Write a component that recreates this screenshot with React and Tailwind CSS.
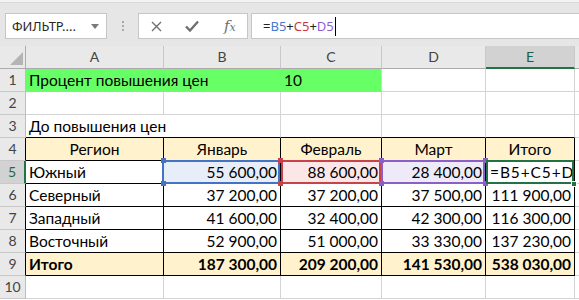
import React from "react";

function Corner({ pos, color }) {
  return <span className={`absolute w-[5px] h-[5px] ${pos} ${color}`} />;
}

export default function App() {
  const g = "h-[23px] border-r border-b border-[#d4d4d4] px-[3px] flex items-end pb-[2px] overflow-hidden whitespace-nowrap";
  const b = "h-[23px] border-r border-b border-black px-[3px] flex items-end pb-[2px] overflow-hidden whitespace-nowrap";
  const rh = "h-[23px] border-b border-[#c8c8c8] bg-[#e9e9e9] flex items-center justify-center text-[14px] text-[#444]";
  const rows = [
    [6, "Северный", "37 200,00", "37 200,00", "37 500,00", "111 900,00"],
    [7, "Западный", "41 600,00", "32 400,00", "42 300,00", "116 300,00"],
    [8, "Восточный", "52 900,00", "51 000,00", "33 330,00", "137 230,00"],
  ];
  return (
    <div className="w-[579px] h-[300px] overflow-hidden bg-white font-['Lato',_sans-serif] text-[15.5px] leading-[18px] text-black">
      {/* toolbar */}
      <div className="h-[46px] bg-[#e6e6e6] flex flex-col">
        <div className="h-[2px] bg-[#f3f3f3]" />
        <div className="h-[1px] bg-[#d9d9d9]" />
        <div className="flex items-start pt-[10px] pl-[5px] font-['Noto_Sans',_sans-serif]">
          <div className="w-[102px] h-[26px] bg-white border border-[#c6c6c6] flex items-center pl-[6px] pr-[7px] justify-between">
            <span className="text-[13px] text-[#262626]">ФИЛЬТР....</span>
            <svg width="8" height="5" viewBox="0 0 8 5"><path d="M0 0h8L4 5z" fill="#7a7a7a" /></svg>
          </div>
          <div className="w-[31px] h-[26px] flex flex-col items-center justify-center gap-[2px]">
            <span className="w-[2px] h-[2px] bg-[#a8a8a8]" />
            <span className="w-[2px] h-[2px] bg-[#a8a8a8]" />
            <span className="w-[2px] h-[2px] bg-[#a8a8a8]" />
          </div>
          <div className="w-[110px] h-[26px] bg-white border border-[#c6c6c6] flex items-center">
            <svg className="ml-[12px]" width="11" height="11" viewBox="0 0 11 11">
              <path d="M1 1L10 10M10 1L1 10" stroke="#6f6f6f" strokeWidth="1.4" fill="none" />
            </svg>
            <svg className="ml-[23px]" width="14" height="12" viewBox="0 0 14 12">
              <path d="M1 6.5L5 10.5L13 1.5" stroke="#6f6f6f" strokeWidth="2.4" fill="none" />
            </svg>
            <span className="ml-[25px] text-[15px] italic text-[#6f6f6f] font-['DejaVu_Serif',_serif] leading-none">
              f<span className="text-[11px]">x</span>
            </span>
          </div>
          <div className="ml-[3px] flex-1 h-[26px] bg-white border border-[#c6c6c6] border-r-0 flex items-center pl-[11px] text-[13px]">
            <span className="text-[#222]">=</span>
            <span className="text-[#4a78d0]">B5</span>
            <span className="text-[#222]">+</span>
            <span className="text-[#d0353f]">C5</span>
            <span className="text-[#222]">+</span>
            <span className="text-[#8f5fcf]">D5</span>
            <span className="w-[1px] h-[19px] bg-black ml-[1px]" />
          </div>
        </div>
      </div>

      {/* sheet */}
      <div className="grid grid-cols-[26px_138px_117px_101px_104px_89px_1fr]">
        {/* header */}
        <div className="h-[23px] bg-[#e9e9e9] border-r border-b border-[#ababab] relative">
          <svg className="absolute left-[10px] top-[6px]" width="13" height="13" viewBox="0 0 13 13"><path d="M13 0V13H0z" fill="#b4b4b4" /></svg>
        </div>
        <div className="h-[23px] bg-[#e9e9e9] border-r border-b border-r-[#c8c8c8] border-b-[#ababab] flex items-end justify-center pb-[2px] text-[14px] text-[#444]">A</div>
        <div className="h-[23px] bg-[#e9e9e9] border-r border-b border-r-[#c8c8c8] border-b-[#ababab] flex items-end justify-center pb-[2px] text-[14px] text-[#444]">B</div>
        <div className="h-[23px] bg-[#e9e9e9] border-r border-b border-r-[#c8c8c8] border-b-[#ababab] flex items-end justify-center pb-[2px] text-[14px] text-[#444]">C</div>
        <div className="h-[23px] bg-[#e9e9e9] border-r border-b border-r-[#c8c8c8] border-b-[#ababab] flex items-end justify-center pb-[2px] text-[14px] text-[#444]">D</div>
        <div className="h-[23px] bg-[#d2d2d2] border-r border-b-2 border-r-[#c8c8c8] border-b-[#217346] flex items-end justify-center pb-[1px] text-[14px] text-[#1e5e3a]">E</div>
        <div className="h-[23px] bg-[#e9e9e9] border-b border-[#ababab]" />

        {/* row 1 */}
        <div className={`${rh} border-r border-r-[#bdbdbd]`}>1</div>
        <div className="col-span-2 h-[23px] bg-[#66ff66] border-b border-[#66ff66] px-[3px] flex items-end pb-[2px] whitespace-nowrap">Процент повышения цен</div>
        <div className="h-[23px] bg-[#66ff66] border-r border-b border-r-[#d4d4d4] border-b-[#66ff66] px-[3px] flex items-end pb-[2px]">10</div>
        <div className={g} />
        <div className={g} />
        <div className={g} />

        {/* row 2 */}
        <div className={`${rh} border-r border-r-[#bdbdbd]`}>2</div>
        <div className={g} />
        <div className={g} />
        <div className={g} />
        <div className={g} />
        <div className={g} />
        <div className={g} />

        {/* row 3 */}
        <div className={`${rh} border-r border-r-[#bdbdbd]`}>3</div>
        <div className="col-span-2 h-[23px] border-r border-b border-r-[#d4d4d4] border-b-black px-[3px] flex items-end pb-[2px] whitespace-nowrap">До повышения цен</div>
        <div className="h-[23px] border-r border-b border-r-[#d4d4d4] border-b-black" />
        <div className="h-[23px] border-r border-b border-r-[#d4d4d4] border-b-black" />
        <div className="h-[23px] border-r border-b border-r-[#d4d4d4] border-b-black" />
        <div className={g} />

        {/* row 4 */}
        <div className={`${rh} border-r border-r-black`}>4</div>
        <div className={`${b} bg-[#fff2cc] justify-center`}>Регион</div>
        <div className={`${b} bg-[#fff2cc] justify-center`}>Январь</div>
        <div className={`${b} bg-[#fff2cc] justify-center`}>Февраль</div>
        <div className={`${b} bg-[#fff2cc] justify-center`}>Март</div>
        <div className={`${b} bg-[#fff2cc] justify-center`}>Итого</div>
        <div className={g} />

        {/* row 5 */}
        <div className="h-[23px] border-b border-[#c8c8c8] border-r-2 border-r-[#217346] bg-[#d2d2d2] flex items-center justify-center text-[14px] text-[#1e6b40]">5</div>
        <div className={b}>Южный</div>
        <div className={`${b} justify-end bg-[#e7eef9] relative overflow-visible`}>
          <span className="absolute -top-[1px] -left-[2px] right-0 -bottom-[1px] border-2 border-[#4472c4]" />
          <Corner pos="-top-[3px] -left-[3px]" color="bg-[#4472c4]" />
          <Corner pos="-bottom-[3px] -left-[3px]" color="bg-[#4472c4]" />
          <span className="relative">55 600,00</span>
        </div>
        <div className={`${b} justify-end bg-[#fbe7e8] relative overflow-visible`}>
          <span className="absolute -top-[1px] left-0 right-0 -bottom-[1px] border-2 border-[#c8424c]" />
          <Corner pos="-top-[3px] -left-[3px]" color="bg-[#c8424c]" />
          <Corner pos="-bottom-[3px] -left-[3px]" color="bg-[#c8424c]" />
          <span className="relative">88 600,00</span>
        </div>
        <div className={`${b} justify-end bg-[#eeeaf8] relative overflow-visible`}>
          <span className="absolute -top-[1px] -left-[1px] right-0 -bottom-[1px] border-2 border-[#8b5fc9]" />
          <Corner pos="-top-[3px] -left-[3px]" color="bg-[#8b5fc9]" />
          <Corner pos="-bottom-[3px] -left-[3px]" color="bg-[#8b5fc9]" />
          <Corner pos="-top-[3px] -right-[3px]" color="bg-[#8b5fc9]" />
          <Corner pos="-bottom-[3px] -right-[3px]" color="bg-[#8b5fc9]" />
          <span className="relative">28 400,00</span>
        </div>
        <div className={`${b} relative overflow-visible`}>
          <span className="absolute inset-0 overflow-hidden flex items-end pb-[2px] pl-[4px] tracking-[0.9px]">=B5+C5+D5</span>
          <span className="absolute -top-[1px] left-0 right-0 -bottom-[1px] border-2 border-[#217346]" />
          <span className="absolute -bottom-[4px] -right-[3px] w-[6px] h-[6px] bg-[#217346] border border-white" />
        </div>
        <div className={g} />

        {rows.map((r) => (
          <React.Fragment key={r[0]}>
            <div className={`${rh} border-r border-r-black`}>{r[0]}</div>
            <div className={b}>{r[1]}</div>
            <div className={`${b} justify-end`}>{r[2]}</div>
            <div className={`${b} justify-end`}>{r[3]}</div>
            <div className={`${b} justify-end`}>{r[4]}</div>
            <div className={`${b} justify-end`}>{r[5]}</div>
            <div className={g} />
          </React.Fragment>
        ))}

        {/* row 9 */}
        <div className={`${rh} border-r border-r-black`}>9</div>
        <div className={`${b} bg-[#fff2cc] font-bold`}>Итого</div>
        <div className={`${b} bg-[#fff2cc] font-bold justify-end`}>187 300,00</div>
        <div className={`${b} bg-[#fff2cc] font-bold justify-end`}>209 200,00</div>
        <div className={`${b} bg-[#fff2cc] font-bold justify-end`}>141 530,00</div>
        <div className={`${b} bg-[#fff2cc] font-bold justify-end`}>538 030,00</div>
        <div className={g} />

        {/* row 10 */}
        <div className={`${rh} border-r border-r-[#bdbdbd]`}>10</div>
        <div className={g} />
        <div className={g} />
        <div className={g} />
        <div className={g} />
        <div className={g} />
        <div className={g} />
      </div>
    </div>
  );
}
